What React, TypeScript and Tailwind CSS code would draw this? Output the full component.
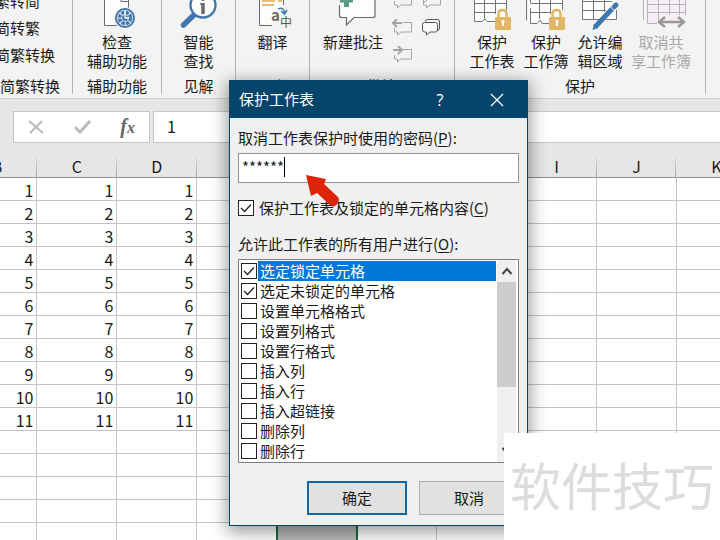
import React, { useState } from "react";

const CELL_COLUMNS = ["B", "C", "D", "E", "F", "G", "H", "I", "J", "K"];
const ROWS = Array.from({ length: 16 }, (_, i) => i + 1);

const OPTIONS = [
  "选定锁定单元格",
  "选定未锁定的单元格",
  "设置单元格格式",
  "设置列格式",
  "设置行格式",
  "插入列",
  "插入行",
  "插入超链接",
  "删除列",
  "删除行",
];

function Group({ label, className, children }: { label: string; className: string; children: React.ReactNode }) {
  return (
    <section className={`flex h-[94px] shrink-0 flex-col justify-between border-r border-[#b4b4b4] ${className}`}>
      <div className="flex justify-center">{children}</div>
      <div className="text-center leading-4 whitespace-nowrap">{label}</div>
    </section>
  );
}

function Tool({ lines, icon, className = "", disabled = false }: { lines: string[]; icon: React.ReactNode; className?: string; disabled?: boolean }) {
  return (
    <button disabled={disabled} className={`flex shrink-0 flex-col items-center leading-[19px] whitespace-nowrap disabled:text-[#a8a8a8] ${className}`}>
      {icon}
      {lines.map((l) => (
        <span key={l}>{l}</span>
      ))}
    </button>
  );
}

const CheckPageIcon = () => (
  <svg width="48" height="32" viewBox="0 0 48 32" fill="none">
    <path d="M11.500 0H35.500V25.500H11.500Z" fill="#fdfdfd" />
    <path d="M11.500 0V25.500H24M35.500 0V8M28 0V1.500H35.500" stroke="#6a6a6a" />
    <circle cx="32" cy="18" r="11" fill="#f3f3f3" />
    <circle cx="32" cy="18" r="9" stroke="#3f76ad" strokeWidth="2" />
    <circle cx="32" cy="18" r="5.500" stroke="#3f76ad" strokeWidth="3.500" strokeDasharray="3.300 1" />
    <circle cx="32" cy="18" r="3" fill="#3f76ad" />
    <path d="M32 11V18H36" stroke="#fff" strokeWidth="1.300" />
  </svg>
);

const SearchInfoIcon = () => (
  <svg width="48" height="32" viewBox="0 0 48 32" fill="none">
    <path d="M19.500 14.500L8.500 25" stroke="#3f76ad" strokeWidth="5.500" strokeLinecap="round" />
    <circle cx="28" cy="5" r="12.500" fill="#fdfdfd" stroke="#3f76ad" strokeWidth="2.300" />
    <path d="M28 3V14" stroke="#6a6a6a" strokeWidth="3.500" />
    <path d="M25 4H28" stroke="#6a6a6a" strokeWidth="1.500" />
    <circle cx="28" cy="-1" r="2" fill="#6a6a6a" />
  </svg>
);

const TranslateIcon = () => (
  <svg width="48" height="32" viewBox="0 0 48 32" fill="none">
    <path d="M10.500 0H34V12L22 25.500H10.500Z" fill="#fdfdfd" />
    <path d="M10.500 0V25.500H23M34.500 0V5" stroke="#6a6a6a" />
    <path d="M13 1H26M13 5H25M29 1H33" stroke="#e3a545" strokeWidth="1.500" />
    <path d="M29 9C33 7 35 9 35.500 13M32 11L35.500 14L38 10" stroke="#3f76ad" strokeWidth="1.500" />
    <text x="22" y="21" fontSize="15" fontWeight="700" fill="#6a6a6a">a</text>
    <text x="31" y="27" fontSize="12" fill="#555">中</text>
  </svg>
);

const NewCommentIcon = () => (
  <svg width="48" height="32" viewBox="0 0 48 32" fill="none">
    <path d="M10.500 5V17.500H17.500V25L25 17.500H46V0H16V5Z" fill="#fdfdfd" />
    <path d="M10.500 5V15.500Q10.500 17.500 12.500 17.500H17.500V25L25 17.500H44Q46 17.500 46 15.500V0" stroke="#6a6a6a" strokeWidth="1.200" />
    <path d="M11 0H24M17.500 0V7" stroke="#5b9b87" strokeWidth="5" />
  </svg>
);

function BubbleIcon({ kind }: { kind: "prev" | "next" | "all" | "note" | "delete" }) {
  if (kind === "all")
    return (
      <svg width="21" height="19" viewBox="0 0 21 19" fill="none" stroke="#555">
        <path d="M4.500 2.500Q4.500 .5 6.500 .5H16.500Q18.500 .5 18.500 3V9Q18.500 11 16.500 11.500" />
        <path d="M3.500 3.500H14.500Q16.500 3.500 16.500 5.500V11Q16.500 13 14.500 13H9L5.500 16V13H3.500Q1.500 13 1.500 11V5.500Q1.500 3.500 3.500 3.500Z" fill="#fafafa" />
      </svg>
    );
  return (
    <svg width="21" height="19" viewBox="0 0 21 19" fill="none" stroke="#a5a5a5">
      <path d="M2.500 9V13H5.500V16L9 13H19.500V3.500H11" />
      {kind === "prev" && <path d="M1 4H10M5 0L1 4L5 8" strokeWidth="2" />}
      {kind === "next" && <path d="M1 4H10M6 0L10 4L6 8" strokeWidth="2" />}
      {kind === "delete" && <path d="M2 7L9 1" strokeWidth="2" />}
      {kind === "note" && <path d="M2.500 9V1M2 12L8 6" />}
    </svg>
  );
}

const Lock = () => (
  <g>
    <path d="M30.500 19V14Q30.500 10 34.500 10T38.500 14V19" stroke="#e3b566" strokeWidth="2.500" />
    <rect x="27" y="17" width="16" height="13" rx="1" fill="#e3b566" />
    <path d="M35 20V26M33.500 21.500H36.500" stroke="#fff" strokeWidth="2" />
  </g>
);

const ProtectSheetIcon = () => (
  <svg width="48" height="32" viewBox="0 0 48 32" fill="none">
    <path d="M6 0H39V22H6Z" fill="#fdfdfd" />
    <path d="M6.500 0V21.500H14L17 19L19 21.500H27M16.500 0V19M27.500 0V14M38.500 0V10M6.500 3.500H39M6.500 12.500H28" stroke="#777" />
    <Lock />
  </svg>
);

const ProtectBookIcon = () => (
  <svg width="48" height="32" viewBox="0 0 48 32" fill="none">
    <path d="M6 0H40V22H6Z" fill="#fdfdfd" />
    <path d="M4.500 0V20.500M8.500 0V3M8.500 8V23.500H15L18 20L20 23.500H27M17.500 0V19M28.500 0V14M40.500 0V10M8.500 3.500H41M8.500 12.500H28" stroke="#777" />
    <Lock />
  </svg>
);

const EditRangeIcon = () => (
  <svg width="48" height="32" viewBox="0 0 48 32" fill="none">
    <path d="M6 0H41V20H6Z" fill="#fdfdfd" />
    <path d="M6.500 0V19.500H24M17.500 0V19.500M28.500 0V12M6.500 1.500H36M6.500 10.500H30M40.500 10V19.500H30" stroke="#777" />
    <path d="M19 27L37 8" stroke="#3f76ad" strokeWidth="5" />
    <path d="M38.500 6.500L40 5" stroke="#3f76ad" strokeWidth="5" strokeLinecap="round" />
    <path d="M34.500 7L38.500 11" stroke="#f3f3f3" />
    <path d="M16.500 30L18 24L22 28Z" fill="#3f76ad" />
  </svg>
);

const UnshareIcon = () => (
  <svg width="68" height="32" viewBox="0 0 68 32" fill="none">
    <path d="M20 0H58V23H20Z" fill="#f5eff5" />
    <path d="M16.500 0V20M20.500 0V23.500H30M31.500 0V20M42.500 0V15M52.500 0V15M20.500 4.500H58M20.500 12.500H58M58.500 0V15" stroke="#b9b0b9" />
    <path d="M33 22H56M38 17L32 22L38 27M51 17L57 22L51 27" stroke="#999" strokeWidth="2.500" />
  </svg>
);

function Tick({ label, checked, onChange, selected = false, boxed = false }: { label: React.ReactNode; checked: boolean; onChange: () => void; selected?: boolean; boxed?: boolean }) {
  return (
    <label className={`flex h-5 items-center ${boxed ? "gap-[5px]" : "gap-px"}`}>
      <span className="grid size-4 shrink-0">
        <input
          type="checkbox"
          checked={checked}
          onChange={onChange}
          className="peer col-start-1 row-start-1 size-4 appearance-none border border-[#222] bg-white"
        />
        <svg viewBox="0 0 16 16" className="pointer-events-none invisible col-start-1 row-start-1 size-4 peer-checked:visible" fill="none" stroke="#222" strokeWidth="1.300">
          <path d="M3 8L6.500 11.500L13 4.500" />
        </svg>
      </span>
      <span className={`h-5 grow leading-5 whitespace-nowrap ${boxed ? "" : "pl-[2px]"} ${selected ? "bg-[#0078d7] text-white" : ""}`}>{label}</span>
    </label>
  );
}

function ProtectDialog() {
  const [password, setPassword] = useState("******");
  const [lock, setLock] = useState(true);
  const [allowed, setAllowed] = useState(OPTIONS.map((_, i) => i < 2));
  const toggle = (n: number) => setAllowed(allowed.map((v, i) => (i === n ? !v : v)));

  return (
    <div role="dialog" aria-labelledby="dialog-title" className="absolute top-20 left-[229px] w-[299px] border border-[#0b4468] bg-[#f0f0f0] shadow-[0_4px_16px_2px_rgba(0,0,0,0.4)]">
      <header className="flex h-[37px] items-center bg-[#05446b] pl-[9px] text-white">
        <h1 id="dialog-title" className="grow">保护工作表</h1>
        <button aria-label="帮助" className="w-9 font-['Open_Sans',sans-serif] text-base">?</button>
        <button aria-label="关闭" className="ml-5 flex w-[49px] justify-start pl-3">
          <svg width="14" height="14" viewBox="0 0 14 14" fill="none" stroke="#fff" strokeWidth="1.300">
            <path d="M1 1L13 13M13 1L1 13" />
          </svg>
        </button>
      </header>
      <div className="px-2 pt-[10px] pb-[10px]">
        <label htmlFor="password" className="block leading-5">
          取消工作表保护时使用的密码(<u className="underline-offset-2">P</u>):
        </label>
        <div className="mt-[5px] flex h-[30px] items-start border border-[#8f9399] bg-white pt-[3px] pl-[3px]">
          <input
            id="password"
            value={password}
            onChange={(e) => setPassword(e.target.value)}
            className="field-sizing-content h-5 leading-5 outline-none"
          />
          <span className="h-5 w-px bg-black" />
        </div>
        <div className="mt-[15px]">
          <Tick boxed checked={lock} onChange={() => setLock(!lock)} label={<>保护工作表及锁定的单元格内容(<u className="underline-offset-2">C</u>)</>} />
        </div>
        <p id="allow-label" className="mt-4 leading-5">
          允许此工作表的所有用户进行(<u className="underline-offset-2">O</u>):
        </p>
        <div className="mt-[5px] flex h-[204px] border border-[#7a808a] bg-white pl-[2px]">
          <ul aria-labelledby="allow-label" className="grow pt-px">
            {OPTIONS.map((o, i) => (
              <li key={o}>
                <Tick label={o} selected={i === 0} checked={allowed[i]} onChange={() => toggle(i)} />
              </li>
            ))}
          </ul>
          <div className="mr-[2px] ml-px flex w-[19px] flex-col items-center bg-[#f0f0f0]">
            <svg width="12" height="22" viewBox="0 0 12 22" fill="none" stroke="#444" strokeWidth="2">
              <path d="M1.500 14L6 9L10.500 14" />
            </svg>
            <div className="h-[105px] w-full bg-[#cdcdcd]" />
            <svg className="mt-auto" width="12" height="22" viewBox="0 0 12 22" fill="none" stroke="#444" strokeWidth="2">
              <path d="M1.500 8L6 13L10.500 8" />
            </svg>
          </div>
        </div>
        <div className="mt-[18px] flex justify-end gap-3">
          <button className="h-[34px] w-[100px] border-2 border-[#1467a3] bg-[#e1e1e1]">确定</button>
          <button className="h-[34px] w-[100px] border border-[#adadad] bg-[#e1e1e1]">取消</button>
        </div>
      </div>
    </div>
  );
}

const Arrow = () => (
  <svg className="pointer-events-none absolute top-[174px] left-[304px]" width="40" height="34" viewBox="0 0 40 34">
    <path d="M2 1L22 5L20 10L34 23Q37 27 31 32Q29 33 27 32L13 19L7 22Z" fill="#dd2408" />
  </svg>
);

export default function App() {
  const [formula, setFormula] = useState("1");
  return (
    <main className="relative flex h-screen flex-col overflow-hidden bg-[#e6e6e6] font-['Noto_Sans_CJK_SC',sans-serif] text-[15px] text-[#1a1a1a]">
      <nav className="flex h-[99px] shrink-0 border-b border-[#cfcfcf] bg-[#f3f3f3]">
        <section className="flex h-[94px] w-[73px] shrink-0 flex-col justify-between overflow-hidden border-r border-[#b4b4b4] whitespace-nowrap">
          <div className="-mt-[13px] -ml-[5px] flex flex-col items-start leading-[27px]">
            <button>繁转简</button>
            <button>简转繁</button>
            <button>简繁转换</button>
          </div>
          <div className="-ml-[30px] leading-4">中文简繁转换</div>
        </section>
        <Group label="辅助功能" className="w-[89px]">
          <Tool lines={["检查", "辅助功能"]} icon={<CheckPageIcon />} />
        </Group>
        <Group label="见解" className="w-[74px]">
          <Tool lines={["智能", "查找"]} icon={<SearchInfoIcon />} />
        </Group>
        <Group label="语言" className="w-[74px]">
          <Tool lines={["翻译"]} icon={<TranslateIcon />} />
        </Group>
        <Group label="批注" className="w-[145px]">
          <Tool lines={["新建批注"]} icon={<NewCommentIcon />} className="w-[78px]" />
          <div className="-mt-3 grid auto-rows-[27px] grid-cols-[29px_29px]">
            <button aria-label="删除"><BubbleIcon kind="delete" /></button>
            <button aria-label="显示批注"><BubbleIcon kind="note" /></button>
            <button aria-label="上一条"><BubbleIcon kind="prev" /></button>
            <button aria-label="显示所有批注"><BubbleIcon kind="all" /></button>
            <button aria-label="下一条"><BubbleIcon kind="next" /></button>
          </div>
        </Group>
        <Group label="保护" className="w-[251px]">
          <Tool lines={["保护", "工作表"]} icon={<ProtectSheetIcon />} className="w-[54px]" />
          <Tool lines={["保护", "工作簿"]} icon={<ProtectBookIcon />} className="w-[54px]" />
          <Tool lines={["允许编", "辑区域"]} icon={<EditRangeIcon />} className="w-[54px]" />
          <Tool lines={["取消共", "享工作簿"]} icon={<UnshareIcon />} className="w-[68px]" disabled />
        </Group>
      </nav>

      <div className="mt-3 flex h-8 shrink-0 gap-[3px] pl-[13px]">
        <div className="flex w-[137px] items-center justify-between border border-[#c6c6c6] bg-white px-[14px]">
          <button aria-label="取消输入">
            <svg width="16" height="14" viewBox="0 0 16 14" fill="none" stroke="#bababa" strokeWidth="2.200">
              <path d="M1 1L15 13M14 1L2 13" />
            </svg>
          </button>
          <button aria-label="输入">
            <svg width="17" height="14" viewBox="0 0 17 14" fill="none" stroke="#bababa" strokeWidth="3">
              <path d="M1 7L6 12L16 1" />
            </svg>
          </button>
          <button aria-label="插入函数" className="font-['Liberation_Serif',serif] text-xl leading-6 font-bold text-[#666] italic">
            f<span className="text-base">x</span>
          </button>
        </div>
        <input
          aria-label="编辑栏"
          value={formula}
          onChange={(e) => setFormula(e.target.value)}
          className="min-w-0 grow border border-r-0 border-[#c6c6c6] bg-white pb-[2px] pl-[13px] text-base outline-none"
        />
      </div>

      <div className="-ml-[43px]">
        <table className="w-[800px] table-fixed border-collapse">
          <thead>
            <tr className="h-[34px] border-b border-[#8e8e8e]">
              {CELL_COLUMNS.map((c) => (
                <th key={c} scope="col" className="bg-linear-to-b from-transparent from-30% to-[#a0a0a0] to-100% bg-[length:1px_100%] bg-right bg-no-repeat p-0 pt-3 text-center text-base leading-[22px] font-normal">
                  {c}
                </th>
              ))}
            </tr>
          </thead>
          <tbody className="bg-white">
            {ROWS.map((r) => (
              <tr key={r} className="h-[23px]">
                {CELL_COLUMNS.map((c, i) => (
                  <td
                    key={c}
                    className={`p-0 pt-[2px] pr-[3px] text-right text-base leading-5 ${
                      c === "F" && r === 16 ? "border-x-2 border-[#1c6b41] bg-[#b9b9b9]" : "border-r border-b border-[#c4c4c4]"
                    }`}
                  >
                    {i < 3 && r < 12 ? r : ""}
                  </td>
                ))}
              </tr>
            ))}
          </tbody>
        </table>
      </div>

      <ProtectDialog />
      <Arrow />
      <div className="absolute right-0 bottom-0 flex h-[107px] w-[216px] items-center justify-center bg-white pb-1 text-[51px] leading-none text-[#dcdcdc]">
        软件技巧
      </div>
    </main>
  );
}
